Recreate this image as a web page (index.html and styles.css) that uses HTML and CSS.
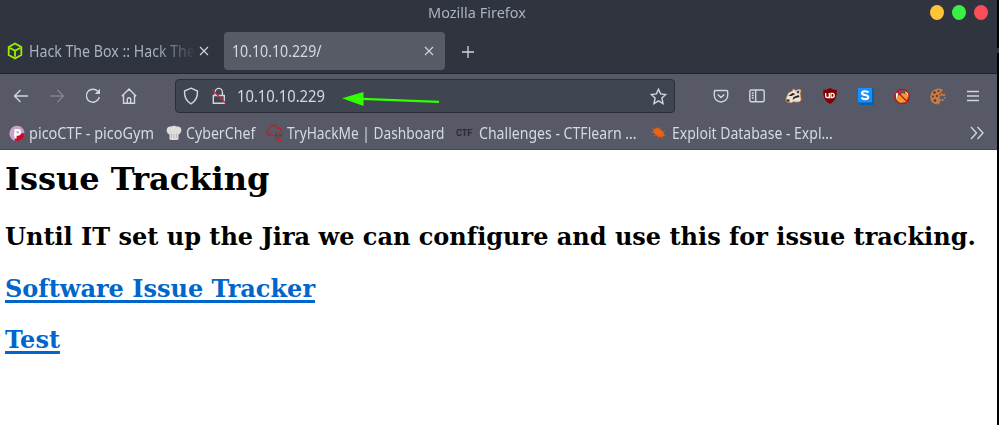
FILE: index.html
```html
<!DOCTYPE html>
<html lang="en">
<head>
<meta charset="utf-8">
<title>Mozilla Firefox</title>
<link rel="stylesheet" href="styles.css">
</head>
<body>
<div class="window">
  <header class="titlebar">
    <span class="window-title">Mozilla Firefox</span>
    <div class="controls"><i class="dot yellow"></i><i class="dot green"></i><i class="dot red"></i></div>
  </header>

  <div class="tabs">
    <div class="tab">
      <svg class="favicon" width="16" height="18" viewBox="0 0 16 18" stroke-linejoin="round"><path d="M8 1.500 14.300 5v8L8 16.500 1.700 13V5zM3 6 8 8.800 13 6M8 8.800v6"/></svg>
      <span class="tab-label fade">Hack The Box :: Hack The B</span>
      <svg class="close" width="10" height="10" viewBox="0 0 10 10"><path d="M1 1l8 8M9 1 1 9"/></svg>
    </div>
    <div class="tab active">
      <span class="tab-label">10.10.10.229/</span>
      <svg class="close" width="10" height="10" viewBox="0 0 10 10"><path d="M1 1l8 8M9 1 1 9"/></svg>
    </div>
    <svg class="plus" width="14" height="14" viewBox="0 0 14 14"><path d="M7 1v12M1 7h12"/></svg>
  </div>

  <nav class="toolbar">
    <div class="nav-buttons">
      <svg width="16" height="16" viewBox="0 0 16 16"><path d="M15 8H1.500M7.500 2 1.500 8l6 6"/></svg>
      <svg class="disabled" width="16" height="16" viewBox="0 0 16 16"><path d="M1 8h13.500M8.500 2l6 6-6 6"/></svg>
      <svg width="16" height="16" viewBox="0 0 16 16"><path d="M12.700 3.300A6.500 6.500 0 1 0 14.300 9"/><path class="solid" d="M15 .8V6H9.800z"/></svg>
      <svg width="16" height="17" viewBox="0 0 16 17"><path d="M.8 8.300 8 1l7.200 7.300M2.500 7v8.200h11V7M6.300 15v-3.500a1.700 1.700 0 0 1 3.400 0V15"/></svg>
    </div>
    <div class="urlbar">
      <svg class="shield" width="16" height="18" viewBox="0 0 16 18"><path d="M8 1.200 14.500 4C14.700 10 12.500 14.500 8 16.800 3.500 14.500 1.300 10 1.500 4z"/></svg>
      <svg class="lock" width="16" height="18" viewBox="0 0 16 18"><path d="M4.200 8V5a3.600 3.600 0 0 1 7.200 0v3M2.300 8.500h11v7.700h-11z"/><path class="slash" d="M1.200 2.500 14.800 16.500"/></svg>
      <span class="address">10.10.10.229</span>
      <svg class="star" width="17" height="17" viewBox="0 0 17 17"><path d="m8.500 1.200 2.100 4.700 5.200.6-3.900 3.500 1.100 5.500-4.500-2.700L4 15.500 5.100 10 1.200 6.500l5.200-.6z"/></svg>
      <svg class="pointer" width="98" height="16" viewBox="0 0 98 16"><path d="M20 6.800 97 9.900"/><path class="head" d="M0 6.200 21.500 0v14z"/></svg>
    </div>
    <div class="extensions">
      <svg width="16" height="16" viewBox="0 0 16 16"><path d="M2.500 2.500h11q1.200 0 1.200 1.200V7.500a6.700 6.500 0 0 1-13.400 0V3.700q0-1.200 1.200-1.200zM4.700 6.500 8 9.600l3.300-3.100"/></svg>
      <svg width="16" height="16" viewBox="0 0 16 16"><rect x=".8" y="2" width="14.400" height="11.800" rx="1.500"/><path d="M6.700 2v12M2.800 5h2M2.800 7.500h2M2.800 10h2"/></svg>
      <svg class="art" width="17" height="16" viewBox="0 0 16 16"><path fill="#e9e2db" stroke="#ee9955" stroke-width=".8" d="M.8 10 3 5l4-2 .8-2L10 2.500l4-1 1.500 1-1 3 1 6-1 2-3.500.5-3-.5-2 1-4-.5-1.500-1z"/><path fill="#222" d="m3 8 4-3 3 1-4 2zM10.500 4l3.500-1.500-1 3zM8 9l5-2 1 2-4 1-3 2zM1 11.500h3v2H1z"/></svg>
      <svg class="art" width="16" height="16" viewBox="0 0 16 16"><path fill="#800000" d="M8 0q3 2 6.800 2 .7 10-6.800 14Q.5 12 1.200 2 5 2 8 0z"/><path fill="none" stroke="#fff" stroke-width="1.300" d="M3.700 5v3.200q0 1.300 1.300 1.300h2.300V5M9 5.300v4.200h1.200q2 0 2-2.100t-2-2.100H8.500"/></svg>
      <svg class="art" width="16" height="17" viewBox="0 0 16 17"><path fill="#0561a9" d="M0 0h14l2 2v15H2l-2-2z"/><path fill="#168fff" d="M0 0h14v14.500H0z"/><path fill="none" stroke="#fff" stroke-width="2.100" d="M10.500 4.500Q9.500 3.300 7 3.300 4 3.300 4 5q0 1.600 3 2t3.200 2.200q0 1.900-3.200 1.900-2.500 0-3.500-1.400"/></svg>
      <svg class="art" width="16" height="17" viewBox="0 0 16 17"><circle cx="8" cy="8.500" r="7" fill="#70505a"/><path fill="#fff" d="m1.500 4 3 1-2 7zM11 3.500l3.500 1v5z"/><path fill="#f29a2e" d="M2.500 12q1-5 4-5.500L8.500 5l2 1 2-2 1.500 5-2 5-6 1z"/><circle cx="8" cy="8.500" r="7.200" fill="none" stroke="#c81010" stroke-width="1.300"/><path stroke="#c81010" stroke-width="1.300" d="m3 3.500 10 10"/></svg>
      <svg class="art" width="16" height="17" viewBox="0 0 16 17"><path fill="#c57a49" d="M8 .5q3-.3 5 1.500l-2 2 1 2h3.500l-.7 2-4-.5-1.500 2 1.500 2.500-1 3-2 1.500Q0 16 .3 8.500.8 1.500 8 .5z"/><g fill="#61331f"><circle cx="4.500" cy="4.500" r="1.200"/><circle cx="8.500" cy="3" r="1"/><circle cx="3" cy="8.500" r="1"/><circle cx="7" cy="8" r="1.100"/><circle cx="5" cy="12.500" r="1.200"/><circle cx="10" cy="6" r=".8"/></g><path fill="#c57a49" d="M11.500 11h2v2h-2zM14 9h1.500v1.500H14z"/></svg>
      <svg class="menu" width="14" height="14" viewBox="0 0 14 14"><path d="M1 2.500h12M1 7h12M1 11.500h12"/></svg>
    </div>
  </nav>

  <div class="bookmarks">
    <a class="b1"><svg width="16" height="17" viewBox="0 0 16 17"><circle cx="8" cy="8.500" r="7.700" fill="#c8a2ca"/><path fill="#c40d2b" d="M6 9.500 15.700 8a7.800 7.800 0 0 1-10 8z"/><path stroke="#fff" stroke-width="2.200" d="M6.500 13.500V5h2.200a2.200 2.200 0 0 1 0 4.700H5"/></svg><span>picoCTF - picoGym</span></a>
    <a class="b2"><svg width="16" height="16" viewBox="0 0 16 16"><path fill="#deddd9" d="M3.500 14.500V9.500Q.3 8 .7 4.500 1.500 1 5 1.500q3-1.500 6 0 3.700-.5 4.300 3 .2 3.500-2.800 5v5q-4.500 1-9 0z"/><path stroke="#aaa" d="M5.500 13V8.500M8 13.500V9M10.500 13V8.500" stroke-width=".7"/></svg><span>CyberChef</span></a>
    <a class="b3"><svg width="17" height="18" viewBox="0 0 17 18"><path stroke="#b5242b" stroke-width="1.400" d="M7 11H3.500A3 3 0 0 1 3 5.300Q3.500 1.500 7.500 1.500q3 0 4.200 2.500 3.800 0 3.600 3.500"/><path stroke="#b5242b" stroke-width="1.600" stroke-dasharray="2 1" d="M9 9h7M8.500 14H15M11 16.500h5"/><path stroke="#464750" stroke-width="2" stroke-dasharray="3 1" d="M9 11.600h7"/></svg><span>TryHackMe | Dashboard</span></a>
    <a class="b4"><b class="ctf">CTF</b><span>Challenges - CTFlearn ...</span></a>
    <a class="b5"><svg width="15" height="14" viewBox="0 0 15 14"><path fill="#f0620f" d="M2 5q1-3 5-3l5 3.500 1.500 4L11 11l-4-.5Q3 8 2 5z"/><path stroke="#dc6222" stroke-width=".7" d="M1 2l3 3M0 6h4M5 1l1 3M9 1v4M14 5l-4 2M14.500 9.500l-4-1M3 10l4-2M7 13l1-3M12 13l-2-3"/></svg><span>Exploit Database - Expl...</span></a>
    <svg class="more" width="14" height="14" viewBox="0 0 14 14"><path d="m1 1 5.500 6L1 13M7.500 1 13 7l-5.500 6"/></svg>
  </div>

  <main class="page">
    <h1>Issue Tracking</h1>
    <h2>Until IT set up the Jira we can configure and use this for issue tracking.</h2>
    <h2><a href="#">Software Issue Tracker</a></h2>
    <h2><a href="#">Test</a></h2>
  </main>
</div>
<div class="edge"></div>
</body>
</html>
```
FILE: styles.css
```css
* { box-sizing: border-box; }
body {
  margin: 0;
  width: 999px;
  height: 425px;
  display: flex;
  overflow: hidden;
  font: 15.4px/20px "Noto Sans", sans-serif;
  color: #d3dae3;
  background: #fff;
}
svg { display: block; flex: none; fill: none; stroke: #d0d5df; stroke-width: 1.4; }
span { display: inline-block; white-space: nowrap; transform-origin: left center; }
.window { width: 997px; height: 425px; display: flex; flex-direction: column; }
.edge { width: 2px; background: linear-gradient(#000 48px, #2f343f 48px, #2f343f 53px, #000 53px); }

.titlebar { height: 32px; background: #2f343f; position: relative; text-align: center; padding: 3px 43px 0 0; font-size: 15.100px; line-height: 19px; color: #a9b2c1; }
.window-title { transform: scaleX(.96); transform-origin: center; }
.controls { position: absolute; right: 9px; top: 5px; display: flex; gap: 8px; }
.dot { width: 14px; height: 15px; border-radius: 50%; }
.yellow { background: #fdc435; }
.green { background: #38f046; }
.red { background: #f94e57; }

.tabs { height: 41px; background: #2f343f; display: flex; align-items: flex-start; }
.tab { height: 38px; display: flex; align-items: center; justify-content: space-between; width: 221px; padding: 0 11px 0 8px; border-radius: 4px; color: #d3dae3; background: #2f343f; }
.tab:first-child { width: 224px; padding: 0 15px 0 7px; color: #a9b4c4; }
.tab.active { background: #575b66; }
.favicon { stroke: #9fef00; stroke-width: 1.8; }
.tab-label { padding-top: 2px; transform: scaleX(.92); }
.fade { width: 184px; margin: 0 -15px 0 5px; mask-image: linear-gradient(to right, #000 136px, transparent 182px); }
.close { stroke-width: 1.1; }
.plus { margin: 13px 0 0 16px; stroke-width: 1.300; }

.toolbar { height: 44px; background: #575966; border-top: 1px solid #20232b; display: flex; align-items: center; padding-top: 1px; }
.nav-buttons { display: flex; align-items: center; gap: 20px; padding-left: 13px; width: 175px; }
.disabled { opacity: .35; }
.solid { fill: #d0d5df; stroke: none; }
.urlbar { position: relative; width: 500px; height: 34px; background: #404552; border: 1px solid #2b2e39; border-radius: 4px; display: flex; align-items: center; padding: 0 7px; }
.lock { margin: 0 10px 0 12px; }
.slash { stroke: #d51e45; }
.address { padding-top: 2px; transform: scaleX(.96); }
.star { margin-left: auto; }
.pointer { position: absolute; left: 166px; top: 12px; stroke: #3f0; stroke-width: 2.2; }
.head { fill: #3f0; stroke: none; }
.extensions { display: flex; align-items: center; gap: 20px; padding-left: 38px; }
.art { stroke: none; }
.menu { stroke-width: 1.5; }

.bookmarks { height: 33px; background: #575966; border-bottom: 1px solid #454752; display: flex; align-items: center; padding: 0 13px 0 9px; }
.bookmarks a { display: flex; align-items: center; gap: 4px; }
.bookmarks a svg { stroke: none; }
.bookmarks span { padding-top: 1px; }
.b1 { width: 157px; }
.b1 span { transform: scaleX(.94); }
.b2 { width: 100px; }
.b2 span { transform: scaleX(.92); }
.b3 { width: 190px; }
.b3 span { transform: scaleX(.893); }
.b4 { width: 195px; }
.b4 span { transform: scaleX(.915); }
.b5 { width: 190px; }
.b5 span { margin-left: 2px; transform: scaleX(.91); }
.ctf { width: 19px; font: bold 9.200px/12px Roboto, sans-serif; color: #2c2d31; letter-spacing: -.2px; }
.more { margin-left: auto; }

.page { flex: 1; background: #fff; color: #000; padding: 9px 5px; font-family: "DejaVu Serif", serif; }
h1, h2 { margin: 0; white-space: nowrap; font-variant-ligatures: none; }
h1 { font-size: 32px; line-height: 40px; }
h2 { font-size: 24px; line-height: 30px; margin-top: 21.500px; }
h1 + h2 { margin-top: 23px; }
.page a { color: #0066cc; text-decoration-thickness: 3px; text-underline-offset: 3px; }
```
